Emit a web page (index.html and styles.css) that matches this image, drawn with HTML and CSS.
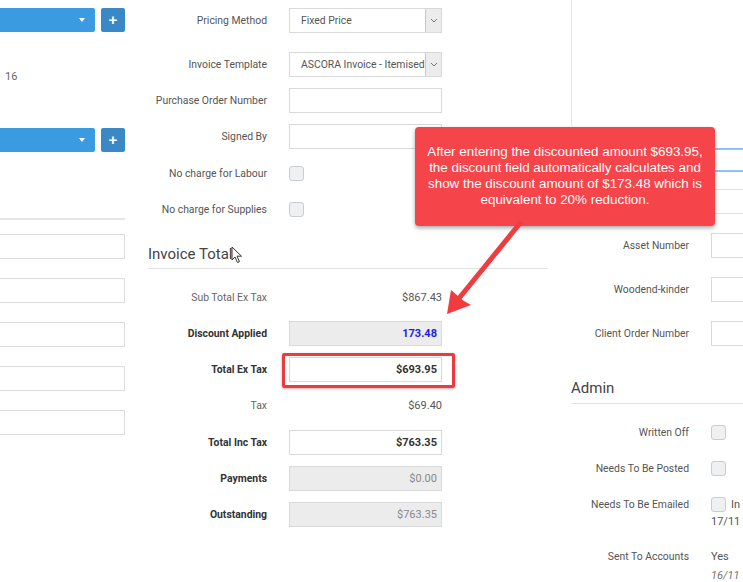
FILE: index.html
```html
<!DOCTYPE html>
<html lang="en">
<head>
    <meta charset="UTF-8">
    <title>Invoice - Totals</title>
    <link rel="stylesheet" href="styles.css">
</head>
<body>
    <div class="page">
        <!-- left column (partly cut off) -->
        <div class="col-left">
            <div class="pick-row">
                <div class="pick"><span class="caret"></span></div>
                <button class="add-btn">+</button>
            </div>
            <div class="note">16</div>
            <div class="pick-row pick-row-2">
                <div class="pick"><span class="caret"></span></div>
                <button class="add-btn">+</button>
            </div>
            <div class="divider"></div>
            <div class="field"></div>
            <div class="field"></div>
            <div class="field"></div>
            <div class="field"></div>
            <div class="field"></div>
        </div>

        <!-- main column -->
        <div class="col-main">
            <div class="form-row first">
                <label class="form-label">Pricing Method</label>
                <div class="select"><span class="select-text">Fixed Price</span><span class="select-btn"><svg width="8" height="5" viewBox="0 0 8 5"><path d="M1 1l3 3 3-3" fill="none" stroke="#777" stroke-width="1"/></svg></span></div>
            </div>
            <div class="form-row">
                <label class="form-label">Invoice Template</label>
                <div class="select"><span class="select-text">ASCORA Invoice - Itemised</span><span class="select-btn"><svg width="8" height="5" viewBox="0 0 8 5"><path d="M1 1l3 3 3-3" fill="none" stroke="#777" stroke-width="1"/></svg></span></div>
            </div>
            <div class="form-row">
                <label class="form-label">Purchase Order Number</label>
                <div class="input"></div>
            </div>
            <div class="form-row before-checks">
                <label class="form-label">Signed By</label>
                <div class="input"></div>
            </div>
            <div class="form-row">
                <label class="form-label">No charge for Labour</label>
                <span class="check"></span>
            </div>
            <div class="form-row">
                <label class="form-label">No charge for Supplies</label>
                <span class="check"></span>
            </div>

            <h2 class="section-title totals-title">Invoice Total</h2>

            <div class="totals">
                <div class="form-row">
                    <label class="form-label soft">Sub Total Ex Tax</label>
                    <div class="plain-value">$867.43</div>
                </div>
                <div class="form-row">
                    <label class="form-label strong">Discount Applied</label>
                    <div class="input readonly value discount">173.48</div>
                </div>
                <div class="form-row">
                    <label class="form-label strong">Total Ex Tax</label>
                    <div class="highlight-wrap">
                        <div class="input value bold">$693.95</div>
                        <span class="highlight"></span>
                    </div>
                </div>
                <div class="form-row">
                    <label class="form-label soft">Tax</label>
                    <div class="plain-value">$69.40</div>
                </div>
                <div class="form-row">
                    <label class="form-label strong">Total Inc Tax</label>
                    <div class="input value bold">$763.35</div>
                </div>
                <div class="form-row">
                    <label class="form-label strong">Payments</label>
                    <div class="input readonly value muted">$0.00</div>
                </div>
                <div class="form-row">
                    <label class="form-label strong">Outstanding</label>
                    <div class="input readonly value muted">$763.35</div>
                </div>
            </div>
        </div>

        <!-- right column (partly cut off) -->
        <div class="col-right">
            <div class="side-rule"></div>
            <div class="grid-lines">
                <div class="grid-sel"></div>
                <div class="grid-line"></div>
                <div class="grid-line tall"></div>
            </div>
            <div class="side-form">
                <div class="form-row side">
                    <label class="form-label side-label">Asset Number</label>
                    <div class="input side-input"></div>
                </div>
                <div class="form-row side">
                    <label class="form-label side-label">Woodend-kinder</label>
                    <div class="input side-input"></div>
                </div>
                <div class="form-row side">
                    <label class="form-label side-label">Client Order Number</label>
                    <div class="input side-input"></div>
                </div>
            </div>

            <h2 class="section-title admin-title">Admin</h2>

            <div class="admin">
                <div class="form-row admin-row">
                    <label class="form-label side-label">Written Off</label>
                    <span class="check"></span>
                </div>
                <div class="form-row admin-row">
                    <label class="form-label side-label">Needs To Be Posted</label>
                    <span class="check"></span>
                </div>
                <div class="form-row admin-row">
                    <label class="form-label side-label">Needs To Be Emailed</label>
                    <div class="admin-value">
                        <span class="check"></span><span class="check-text">In</span>
                        <div class="sub-date">17/11</div>
                    </div>
                </div>
                <div class="form-row admin-row sent">
                    <label class="form-label side-label">Sent To Accounts</label>
                    <div class="admin-value">
                        <span class="yes">Yes</span>
                        <div class="sub-date italic">16/11</div>
                    </div>
                </div>
            </div>
        </div>
    </div>

    <!-- annotation overlay -->
    <div class="callout">
        After entering the discounted amount $693.95,<br>
        the discount field automatically calculates and<br>
        show the discount amount of $173.48 which is<br>
        equivalent to 20% reduction.
    </div>
    <svg class="callout-arrow" width="743" height="582" viewBox="0 0 743 582">
        <path d="M521 222 L456 302" stroke="#f03c3f" stroke-width="5" stroke-linecap="butt" fill="none"/>
        <path d="M447 314 L451 290 L458 296 L464 301 L471 305 Z" fill="#f03c3f"/>
    </svg>
    <svg class="cursor" width="12" height="18" viewBox="0 0 12 18">
        <path d="M1 1 L1 14 L4 11 L6.5 16.5 L8.5 15.6 L6 10.2 L10.5 10.2 Z" fill="#fff" stroke="#333" stroke-width="1" stroke-linejoin="round"/>
    </svg>
</body>
</html>
```

FILE: styles.css
```css
* {
    margin: 0;
    padding: 0;
    box-sizing: border-box;
}

body {
    font-family: 'Roboto', 'Liberation Sans', sans-serif;
    font-size: 10.4px;
    color: #555;
    background: #fff;
    width: 743px;
    height: 582px;
    overflow: hidden;
    position: relative;
}

.page {
    display: flex;
    width: 743px;
}

/* left column */
.col-left {
    width: 140px;
    flex-shrink: 0;
    padding-right: 15px;
}

.pick-row {
    display: flex;
    gap: 6px;
    margin-top: 8px;
    height: 24px;
}

.pick-row-2 {
    margin-top: 44px;
}

.pick {
    flex: 1;
    background: #3b9be0;
    border-radius: 0 2px 2px 0;
    position: relative;
}

.caret {
    position: absolute;
    right: 10px;
    top: 10px;
    border: 3px solid transparent;
    border-top: 4px solid #fff;
}

.add-btn {
    width: 24px;
    height: 24px;
    background: #3a89c6;
    border: none;
    border-radius: 2px;
    color: #fff;
    font-family: 'Liberation Sans', sans-serif;
    font-size: 15px;
    font-weight: 700;
    line-height: 24px;
}

.note {
    margin-top: 38px;
    padding-left: 5px;
    line-height: 14px;
    font-size: 11px;
    color: #666;
}

.divider {
    margin-top: 66px;
    height: 2px;
    background: #e6e6e6;
}

.field {
    height: 25px;
    margin-top: 14px;
    border: 1px solid #dcdcdc;
    border-left: none;
}

.field + .field {
    margin-top: 19px;
}

/* main column */
.col-main {
    width: 415px;
    flex-shrink: 0;
}

.form-row {
    display: flex;
    align-items: center;
    gap: 22px;
    height: 25px;
    margin-bottom: 11px;
}

.form-row.first {
    margin-top: 8px;
    margin-bottom: 19px;
}

.form-row.before-checks {
    margin-bottom: 12px;
}

.form-label {
    width: 127px;
    flex-shrink: 0;
    text-align: right;
    color: #555;
    white-space: nowrap;
}

.form-label.soft {
    color: #666;
}

.form-label.strong {
    color: #333;
    font-weight: 700;
}

.input,
.select {
    width: 153px;
    height: 25px;
    border: 1px solid #d9d9d9;
    background: #fff;
}

.select {
    display: flex;
    align-items: stretch;
}

.select-text {
    flex: 1;
    padding-left: 11px;
    line-height: 23px;
    color: #555;
    white-space: nowrap;
    overflow: hidden;
}

.select-btn {
    width: 16px;
    background: #ececec;
    border-left: 1px solid #c8c8c8;
    display: flex;
    align-items: center;
    justify-content: center;
}

.check {
    display: inline-block;
    width: 15px;
    height: 15px;
    border: 1px solid #c9ccd0;
    border-radius: 3px;
    background: #eef0f2;
    vertical-align: middle;
}

.section-title {
    font-size: 15px;
    font-weight: 400;
    line-height: 18px;
    color: #444;
    border-bottom: 1px solid #e3e3e3;
}

.totals-title {
    margin-top: 23px;
    margin-left: 8px;
    width: 400px;
    padding-bottom: 5px;
}

.totals {
    margin-top: 15.5px;
}

.totals .form-row {
    margin-bottom: 11.3px;
}

.plain-value {
    width: 153px;
    text-align: right;
    font-size: 11px;
    color: #555;
}

.value {
    text-align: right;
    padding-right: 4px;
    line-height: 23px;
    font-size: 11px;
    color: #555;
}

.readonly {
    background: #ececec;
}

.value.bold {
    color: #333;
    font-weight: 700;
}

.value.discount {
    color: #1d1df0;
    font-weight: 700;
}

.value.muted {
    color: #888;
}

.highlight-wrap {
    position: relative;
}

.highlight {
    position: absolute;
    left: -7px;
    right: -13px;
    top: -4px;
    bottom: -6px;
    border: 3px solid #eb3b3f;
    border-radius: 2px;
    box-shadow: 0 1px 3px rgba(0, 0, 0, 0.3);
}

/* right column */
.col-right {
    flex: 1;
    min-width: 0;
}

.side-rule {
    margin-left: 16px;
    height: 126px;
    border-left: 1px solid #e6e6e6;
}

.grid-lines {
    margin-left: 160px;
    margin-top: 22px;
}

.grid-sel {
    height: 24px;
    border-top: 2px solid #8fc3e8;
    border-bottom: 2px solid #8fc3e8;
}

.grid-line {
    height: 18px;
    border-bottom: 1px solid #e3e3e3;
}

.grid-line.tall {
    height: 24px;
}

.side-form {
    margin-top: 19px;
    padding-left: 16px;
}

.form-row.side {
    margin-bottom: 19px;
}

.side-label {
    width: 118px;
}

.side-input {
    width: 80px;
    flex-shrink: 0;
}

.admin-title {
    margin-top: 33px;
    margin-left: 16px;
    padding-bottom: 6px;
}

.admin {
    margin-top: 16px;
    padding-left: 16px;
}

.admin-value {
    white-space: nowrap;
    position: relative;
    line-height: 15px;
    font-size: 11px;
}

.check-text {
    margin-left: 5px;
    vertical-align: middle;
}

.sub-date {
    position: absolute;
    left: 0;
    top: 17px;
    color: #555;
}

.sub-date.italic {
    font-style: italic;
    color: #777;
    top: 19px;
}

.form-row.sent {
    margin-top: 27px;
}

.yes {
    color: #555;
}

/* annotation overlay */
.callout {
    position: absolute;
    left: 415px;
    top: 127px;
    width: 300px;
    height: 99px;
    padding-top: 17px;
    background: #f5444a;
    border-radius: 4px;
    box-shadow: 0 2px 4px rgba(0, 0, 0, 0.35);
    color: #fff;
    font-family: 'Liberation Sans', Arial, sans-serif;
    font-size: 13.4px;
    line-height: 16px;
    text-align: center;
}

.callout-arrow {
    position: absolute;
    left: 0;
    top: 0;
    pointer-events: none;
}

.cursor {
    position: absolute;
    left: 231px;
    top: 246px;
}
```
